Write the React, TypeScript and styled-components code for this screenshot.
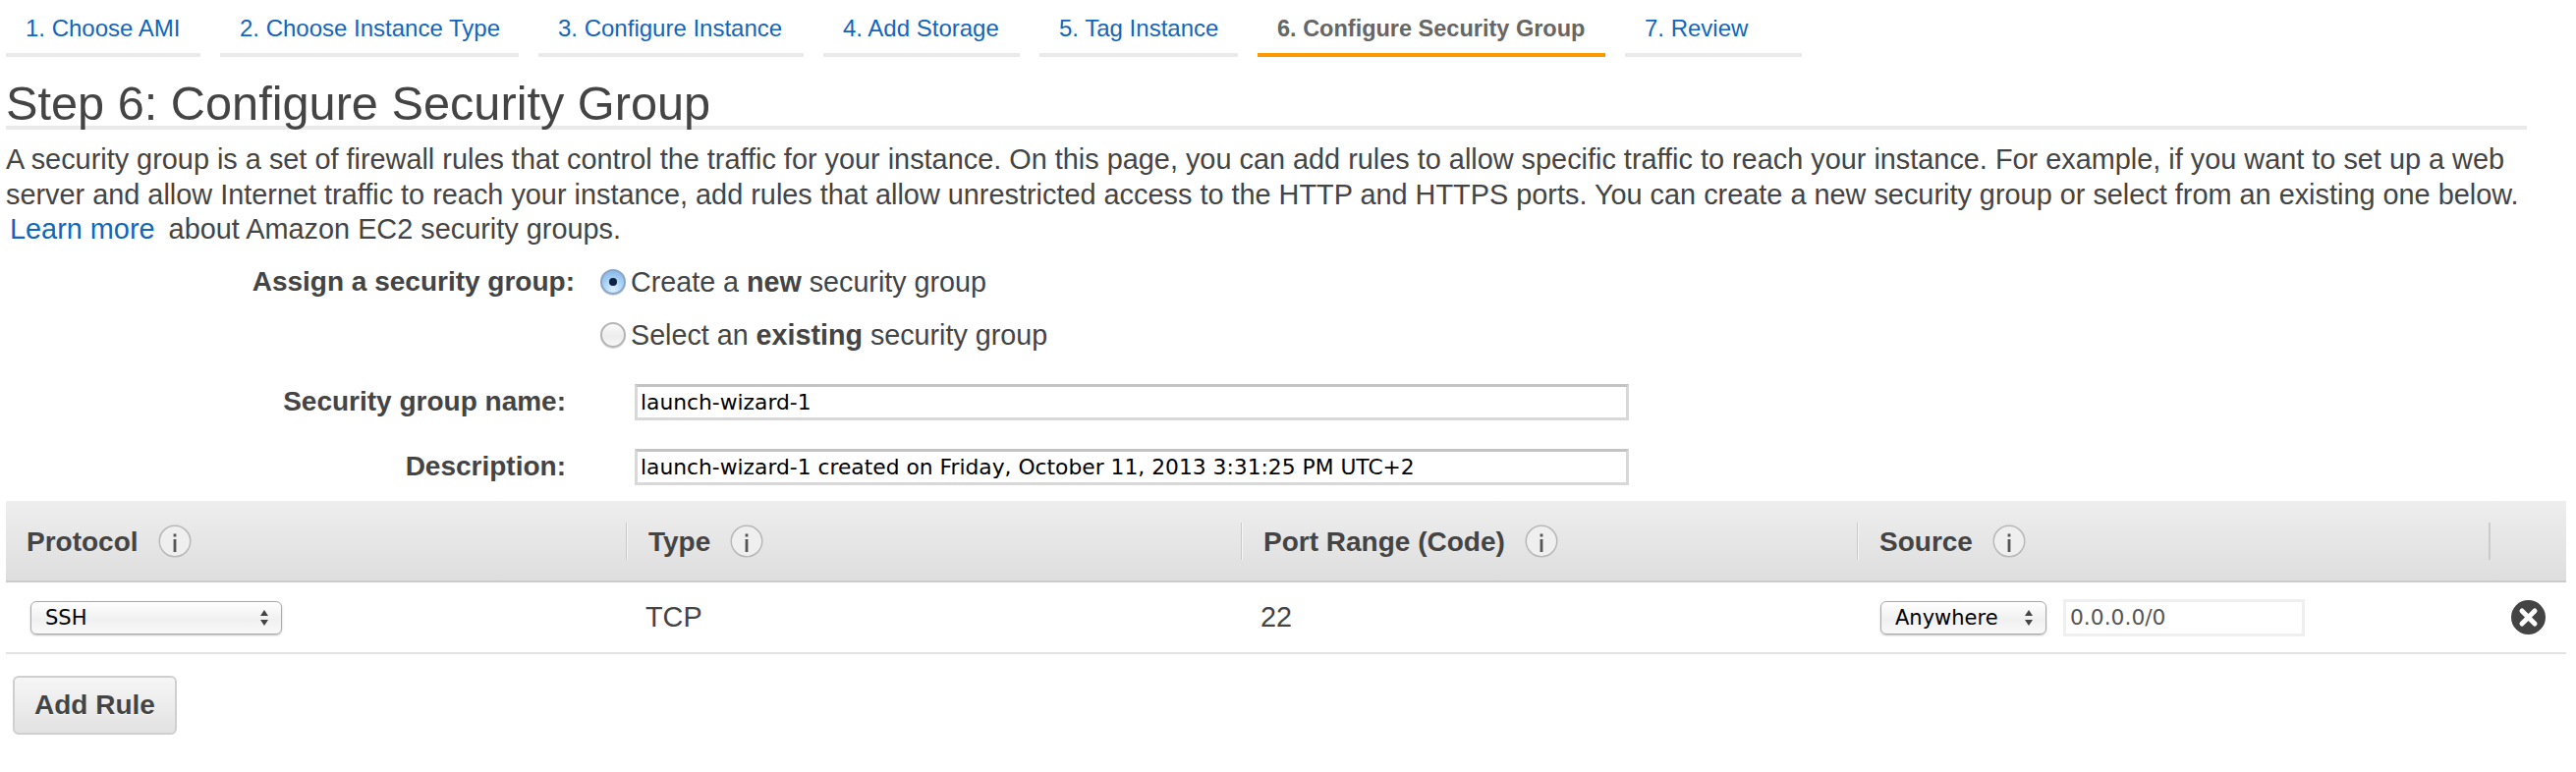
import React from 'react'
import styled, { createGlobalStyle } from 'styled-components'

const GlobalStyle = createGlobalStyle`
  html, body {
    margin: 0;
    padding: 0;
    background: #fff;
  }
  body {
    font-family: "Liberation Sans", Arial, sans-serif;
    color: #444;
  }
`

const controlFont = '"DejaVu Sans", sans-serif'

const Page = styled.div`
  width: 2622px;
  height: 786px;
  padding-left: 6px;
  box-sizing: border-box;
  overflow: hidden;
`

const Tabs = styled.nav`
  display: flex;
  gap: 20px;
  height: 58px;
`

const Tab = styled.a<{ $active?: boolean; $width: number }>`
  box-sizing: border-box;
  width: ${p => p.$width}px;
  height: 58px;
  padding: 13px 0 0 20px;
  font-size: ${p => (p.$active ? '23.5px' : '24px')};
  line-height: 32px;
  white-space: nowrap;
  font-weight: ${p => (p.$active ? 'bold' : 'normal')};
  color: ${p => (p.$active ? '#666' : '#1166bb')};
  border-bottom: 4px solid ${p => (p.$active ? '#ff9900' : '#eaeaea')};
`

const Title = styled.h1`
  width: 2566px;
  margin: 0;
  padding-top: 24px;
  height: 46px;
  line-height: 46px;
  font-size: 48.7px;
  font-weight: normal;
  border-bottom: 4px solid #eaeaea;
  color: #444;
  white-space: nowrap;
`

const Intro = styled.p`
  margin: 13px 0 8px;
  font-size: 28.87px;
  line-height: 35.5px;
  height: 107px;
  white-space: nowrap;
`

const LearnMore = styled.a`
  color: #1166bb;
  margin: 0 14px 0 4px;
`

const FormRow = styled.div<{ $labelWidth: number; $gap: number; $height: number }>`
  display: grid;
  grid-template-columns: ${p => p.$labelWidth}px auto;
  column-gap: ${p => p.$gap}px;
  align-items: center;
  justify-content: start;
  height: ${p => p.$height}px;
`

const Fields = styled.div`
  margin-top: 8px;
`

const Label = styled.label`
  text-align: right;
  font-size: 28px;
  font-weight: bold;
  white-space: nowrap;
`

const RadioOption = styled.div`
  display: flex;
  align-items: center;
  gap: 5px;
  font-size: 28.7px;
`

const Radio = styled.span<{ $checked?: boolean }>`
  display: flex;
  align-items: center;
  justify-content: center;
  box-sizing: border-box;
  width: 26px;
  height: 26px;
  border-radius: 50%;
  border: 2px solid ${p => (p.$checked ? '#8aa6c6' : '#b4b4b4')};
  background: ${p =>
    p.$checked
      ? 'radial-gradient(circle at 50% 85%, #d9eefe 0%, #a8d0f5 50%, #7fb0e4 100%)'
      : 'linear-gradient(#fbfbfb, #ececec 55%, #f8f8f8)'};
  box-shadow: 0 1px 1px rgba(0, 0, 0, 0.15);
`

const RadioDot = styled.span`
  width: 8px;
  height: 8px;
  border-radius: 50%;
  background: #0d2340;
`

const TextField = styled.div`
  box-sizing: border-box;
  width: 1012px;
  height: 37px;
  padding: 1px 0 0 3px;
  border: 3px solid #d8d8d8;
  border-top-color: #c4c4c4;
  font-family: ${controlFont};
  font-size: 21.8px;
  line-height: 30px;
  color: #000;
  white-space: nowrap;
`

const Rules = styled.section`
  width: 2606px;
  margin-top: 2px;
`

const ruleColumns = '631px 626px 627px 643px 79px'

const RuleHead = styled.div`
  display: grid;
  grid-template-columns: ${ruleColumns};
  align-items: center;
  box-sizing: border-box;
  height: 83px;
  background: linear-gradient(#eeeeee, #dedede);
  border-bottom: 2px solid #cccccc;
`

const HeadCell = styled.div<{ $first?: boolean; $last?: boolean }>`
  display: flex;
  align-items: center;
  gap: 20px;
  box-sizing: border-box;
  height: 38px;
  padding-left: ${p => (p.$first ? '20px' : '22px')};
  border-left: 1px solid ${p => (p.$first ? 'transparent' : '#c8c8c8')};
  box-shadow: ${p => (p.$first ? 'none' : `inset 1px 0 0 ${p.$last ? '#cfcfcf' : '#f6f6f6'}`)};
  font-size: 28px;
  font-weight: bold;
  white-space: nowrap;
`

const HeadLabel = styled.span`
  padding-top: 2px;
`

const RuleRow = styled.div`
  display: grid;
  grid-template-columns: ${ruleColumns};
  align-items: center;
  box-sizing: border-box;
  height: 73px;
  border-bottom: 2px solid #e2e2e2;
  font-size: 28.8px;
`

const Cell = styled.div<{ $pad: number }>`
  display: flex;
  align-items: center;
  padding-left: ${p => p.$pad}px;
`

const SelectBox = styled.div<{ $width: number }>`
  display: flex;
  align-items: center;
  justify-content: space-between;
  box-sizing: border-box;
  width: ${p => p.$width}px;
  height: 34px;
  padding: 0 12px 0 14px;
  border: 1px solid #a9a9a9;
  border-radius: 6px;
  background: linear-gradient(#ffffff, #f0f0f0 55%, #f9f9f9);
  box-shadow: 0 1px 2px rgba(0, 0, 0, 0.25);
  font-family: ${controlFont};
  font-size: 21px;
  color: #000;
`

const CidrField = styled.div`
  box-sizing: border-box;
  width: 246px;
  height: 38px;
  margin-left: 17px;
  padding-left: 4px;
  border: 3px solid #efefef;
  font-family: ${controlFont};
  font-size: 21.8px;
  line-height: 32px;
  color: #555;
`

const AddRule = styled.button`
  display: block;
  box-sizing: border-box;
  width: 167px;
  height: 60px;
  margin: 22px 0 0 7px;
  padding: 0;
  border: 2px solid #cfcfcf;
  border-radius: 6px;
  background: linear-gradient(#f6f6f6, #e2e2e2);
  font-family: "Liberation Sans", Arial, sans-serif;
  font-size: 28px;
  font-weight: bold;
  color: #444;
  text-shadow: 0 1px 0 #fff;
`

const InfoIcon = () => (
  <svg width="34" height="34" viewBox="0 0 34 34">
    <circle cx="17" cy="17" r="15.75" fill="#efefef" stroke="#b8b8b8" strokeWidth="1.5" />
    <rect x="15.6" y="9.5" width="2.8" height="3" fill="#555" />
    <rect x="15.6" y="15" width="2.8" height="13" fill="#555" />
  </svg>
)

const UpDownIcon = () => (
  <svg width="10" height="18" viewBox="0 0 10 18">
    <path d="M5 1 L9 7 L1 7 Z M5 17 L1 11 L9 11 Z" fill="#444" />
  </svg>
)

const RemoveIcon = () => (
  <svg width="35" height="35" viewBox="0 0 35 35">
    <circle cx="17.5" cy="17.5" r="17.5" fill="#444" />
    <path d="M11 11 L24 24 M24 11 L11 24" stroke="#fff" strokeWidth="5" strokeLinecap="round" />
  </svg>
)

const steps = [
  { label: '1. Choose AMI', width: 198 },
  { label: '2. Choose Instance Type', width: 304 },
  { label: '3. Configure Instance', width: 270 },
  { label: '4. Add Storage', width: 200 },
  { label: '5. Tag Instance', width: 202 },
  { label: '6. Configure Security Group', width: 354 },
  { label: '7. Review', width: 180 },
]

const columns = ['Protocol', 'Type', 'Port Range (Code)', 'Source']

export default function App() {
  return (
    <Page>
      <GlobalStyle />
      <Tabs>
        {steps.map((step, i) => (
          <Tab key={step.label} $active={i === 5} $width={step.width}>
            {step.label}
          </Tab>
        ))}
      </Tabs>
      <Title>Step 6: Configure Security Group</Title>
      <Intro>
        A security group is a set of firewall rules that control the traffic for your instance. On this page, you can add rules to allow specific traffic to reach your instance. For example, if you want to set up a web
        <br />
        server and allow Internet traffic to reach your instance, add rules that allow unrestricted access to the HTTP and HTTPS ports. You can create a new security group or select from an existing one below.
        <br />
        <LearnMore>Learn more</LearnMore>about Amazon EC2 security groups.
      </Intro>
      <FormRow $labelWidth={579} $gap={26} $height={54}>
        <Label>Assign a security group:</Label>
        <RadioOption>
          <Radio $checked>
            <RadioDot />
          </Radio>
          <span>
            Create a <b>new</b> security group
          </span>
        </RadioOption>
      </FormRow>
      <FormRow $labelWidth={579} $gap={26} $height={54}>
        <span />
        <RadioOption>
          <Radio />
          <span>
            Select an <b>existing</b> security group
          </span>
        </RadioOption>
      </FormRow>
      <Fields>
        <FormRow $labelWidth={570} $gap={70} $height={66}>
          <Label>Security group name:</Label>
          <TextField>launch-wizard-1</TextField>
        </FormRow>
        <FormRow $labelWidth={570} $gap={70} $height={66}>
          <Label>Description:</Label>
          <TextField>launch-wizard-1 created on Friday, October 11, 2013 3:31:25 PM UTC+2</TextField>
        </FormRow>
      </Fields>
      <Rules>
        <RuleHead>
          {columns.map((col, i) => (
            <HeadCell key={col} $first={i === 0}>
              <HeadLabel>{col}</HeadLabel>
              <InfoIcon />
            </HeadCell>
          ))}
          <HeadCell $last />
        </RuleHead>
        <RuleRow>
          <Cell $pad={25}>
            <SelectBox $width={256}>
              SSH
              <UpDownIcon />
            </SelectBox>
          </Cell>
          <Cell $pad={20}>TCP</Cell>
          <Cell $pad={20}>22</Cell>
          <Cell $pad={24}>
            <SelectBox $width={169}>
              Anywhere
              <UpDownIcon />
            </SelectBox>
            <CidrField>0.0.0.0/0</CidrField>
          </Cell>
          <Cell $pad={23}>
            <RemoveIcon />
          </Cell>
        </RuleRow>
      </Rules>
      <AddRule>Add Rule</AddRule>
    </Page>
  )
}
